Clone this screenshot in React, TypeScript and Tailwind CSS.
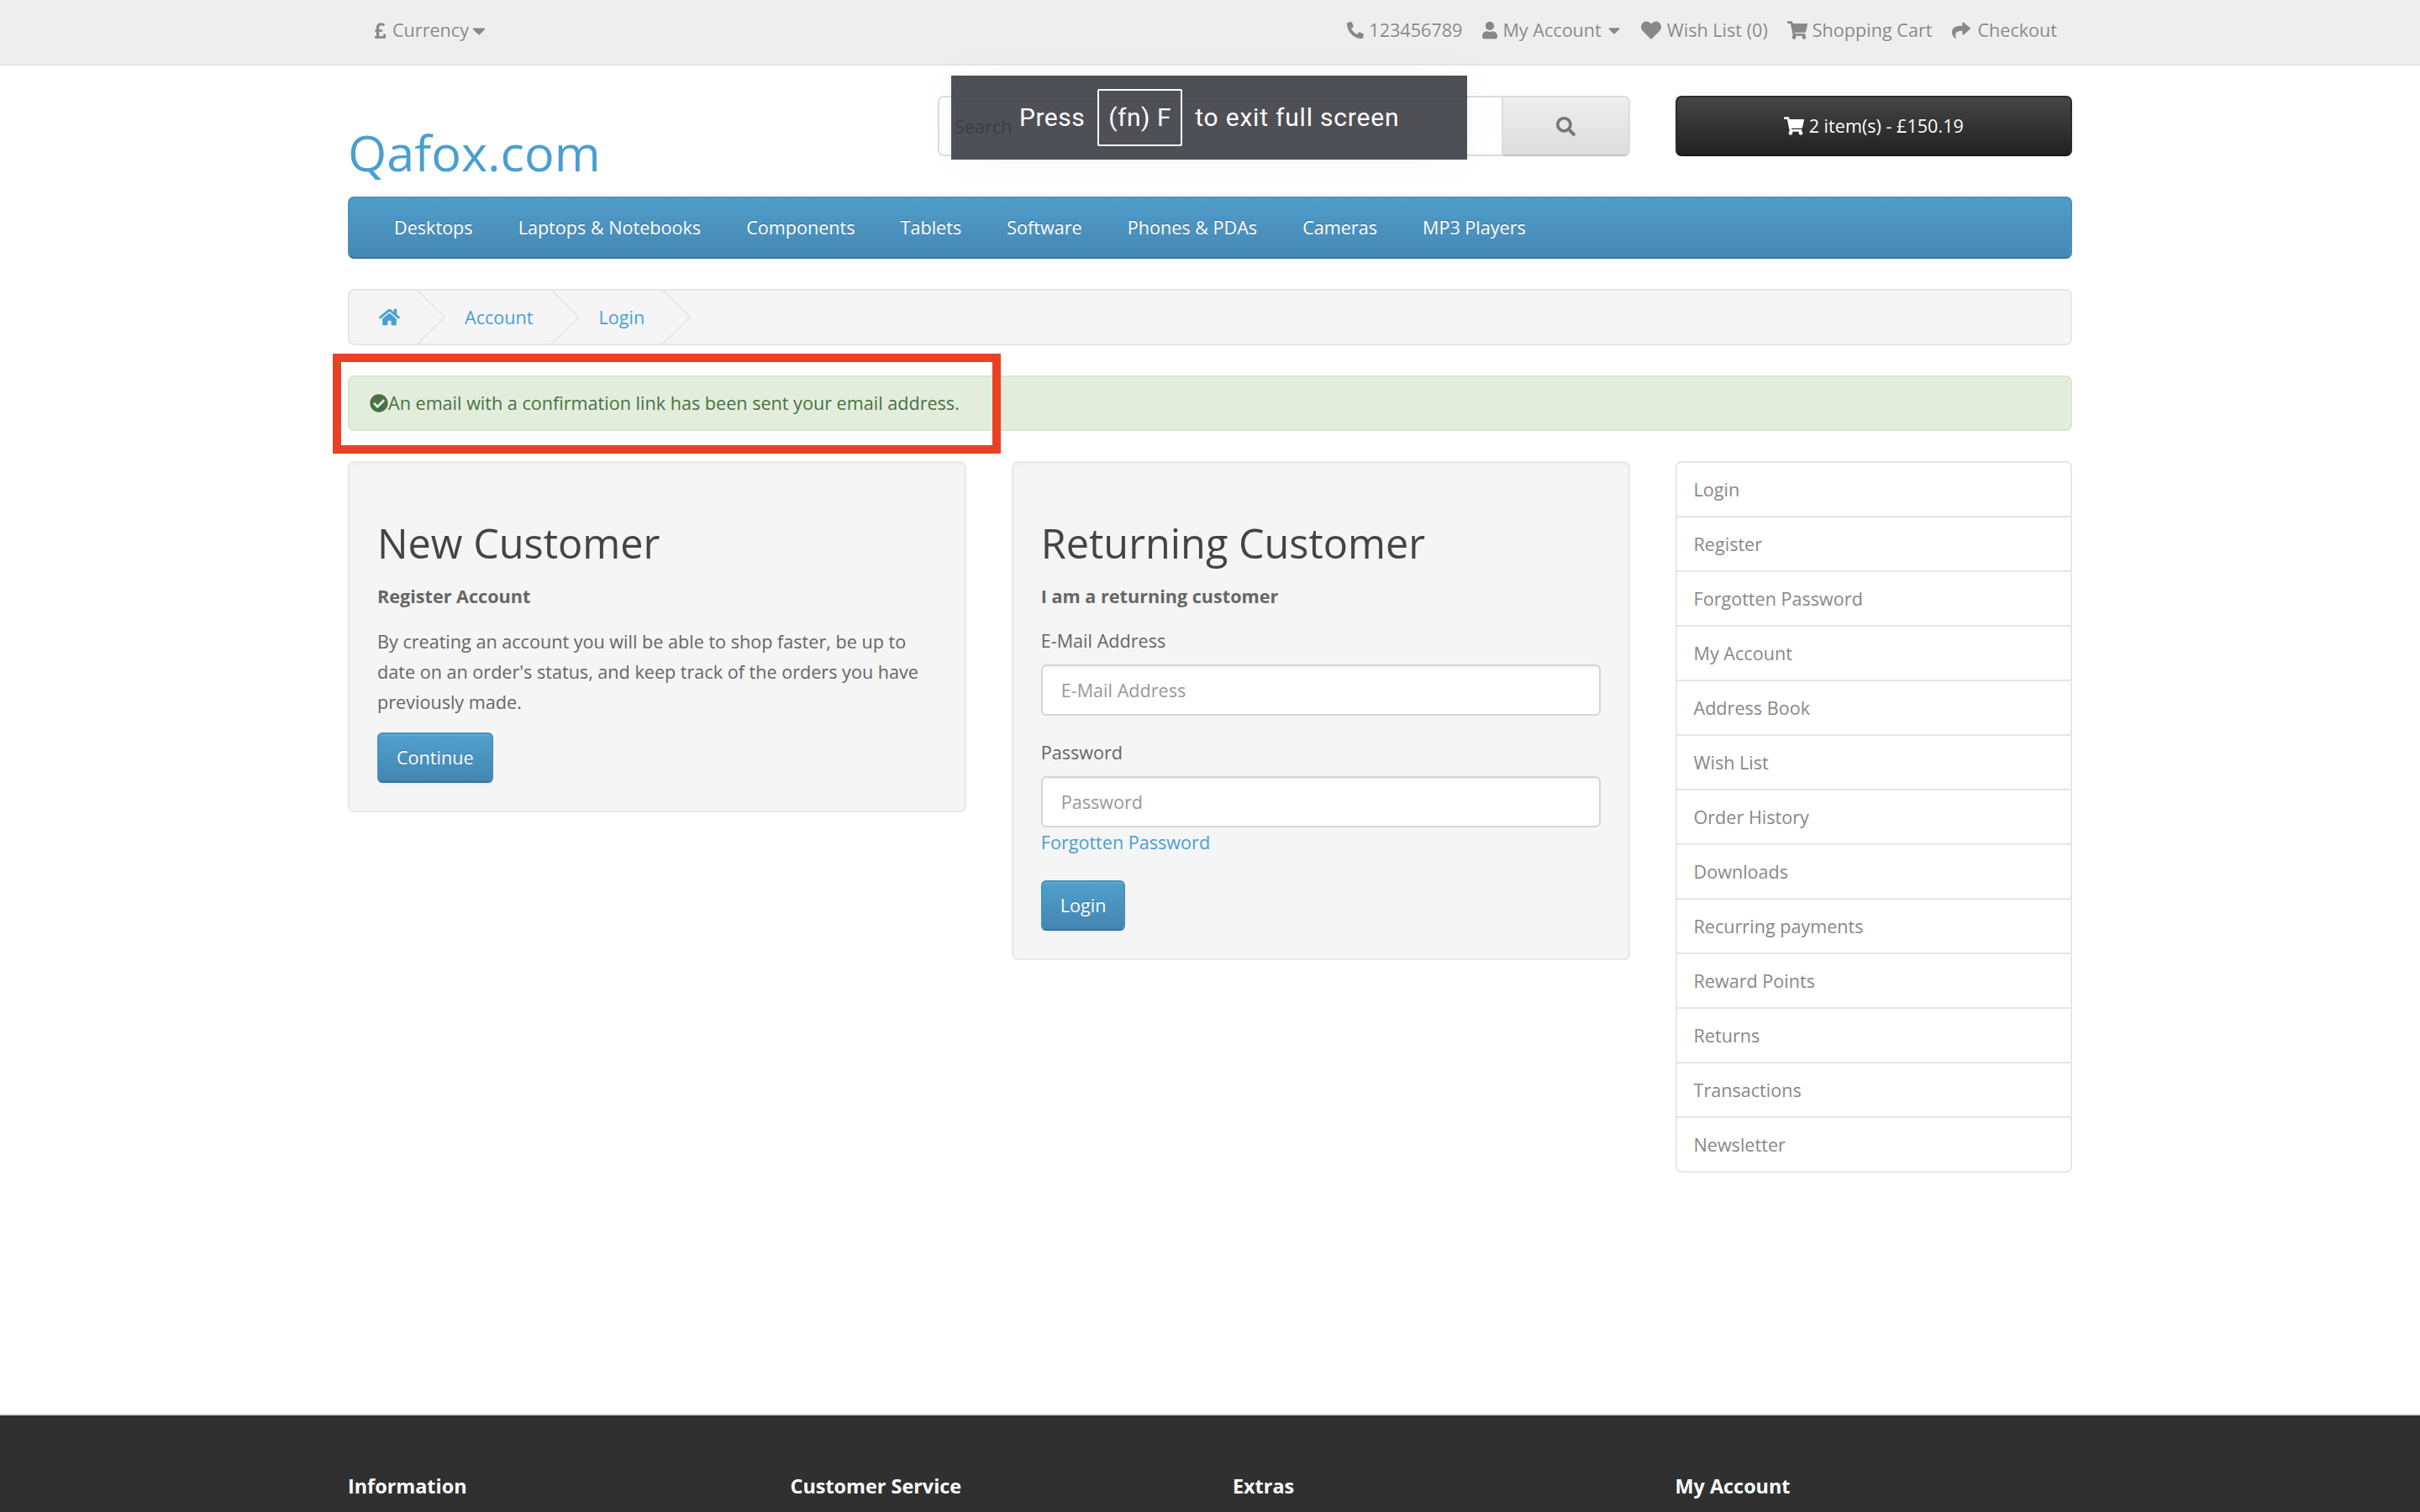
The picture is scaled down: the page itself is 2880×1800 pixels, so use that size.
import {
  FaCaretDown,
  FaCheckCircle,
  FaHeart,
  FaHome,
  FaPhone,
  FaPoundSign,
  FaSearch,
  FaShare,
  FaShoppingCart,
  FaUser,
} from "react-icons/fa";

const navItems = ["Desktops", "Laptops & Notebooks", "Components", "Tablets", "Software", "Phones & PDAs", "Cameras", "MP3 Players"];
const sideLinks = [
  "Login",
  "Register",
  "Forgotten Password",
  "My Account",
  "Address Book",
  "Wish List",
  "Order History",
  "Downloads",
  "Recurring payments",
  "Reward Points",
  "Returns",
  "Transactions",
  "Newsletter",
];
const footerCols = ["Information", "Customer Service", "Extras", "My Account"];

const blueBtn =
  "h-[60px] rounded-[6px] border-[2px] border-[#4a90bb] border-b-[#33749e] bg-gradient-to-b from-[#50a0cd] to-[#4486b1] px-[21px] text-[21.6px] text-white [text-shadow:0_-1px_0_rgba(0,0,0,0.25)] shadow-[inset_0_2px_0_rgba(255,255,255,0.1),0_2px_3px_rgba(0,0,0,0.05)]";
const panel =
  "w-[735.75px] rounded-[7px] border-[2px] border-[#e9e9e9] bg-[#f5f5f5] px-[33px] pt-[33px] pb-[33px] shadow-[inset_0_2px_2px_rgba(0,0,0,0.04)]";
const field =
  "block h-[61px] w-full rounded-[6px] border-[2px] border-[#d6d6d6] bg-white px-[22px] text-[21.6px] placeholder:text-[#999] shadow-[inset_0_2px_2px_rgba(0,0,0,0.05)]";

function Chevron() {
  return (
    <svg className="absolute top-0 right-0 h-full w-[34px]" viewBox="0 0 34 67" preserveAspectRatio="none" fill="none">
      <polyline points="1,0 33,33.5 1,67" stroke="#e4e4e4" strokeWidth="1.6" />
    </svg>
  );
}

function TopItem({ icon, label, className }: { icon: React.ReactNode; label: string; className?: string }) {
  return (
    <a className={"flex items-center gap-[6px] " + (className ?? "")}>
      {icon}
      <span>{label}</span>
    </a>
  );
}

export default function App() {
  return (
    <div className="relative flex h-screen flex-col overflow-hidden bg-white font-['Open_Sans',sans-serif] text-[21.6px] leading-[36px] text-[#666]">
      {/* Top bar */}
      <nav className="h-[78px] shrink-0 border-b-[2px] border-[#e5e5e5] bg-[#eeeeee] text-[#888] [text-shadow:0_1px_0_#fff]">
        <div className="mx-auto flex h-[72px] w-[2052px] items-center justify-between pr-[18px] pl-[31px]">
          <div className="flex items-center">
            <FaPoundSign className="mr-[7px] h-[21px] w-[15px]" />
            <span>Currency</span>
            <FaCaretDown className="ml-[4px] h-[25px] w-[16px]" />
          </div>
          <div className="flex items-center">
            <TopItem icon={<FaPhone className="h-[24px] w-[20px] -scale-x-100" />} label="123456789" />
            <a className="ml-[24px] flex items-center gap-[6px]">
              <FaUser className="h-[22px] w-[18px]" />
              <span>My Account</span>
              <FaCaretDown className="ml-[2px] h-[22px] w-[14px]" />
            </a>
            <TopItem className="ml-[24px]" icon={<FaHeart className="h-[24px] w-[26px]" />} label="Wish List (0)" />
            <TopItem className="ml-[23px]" icon={<FaShoppingCart className="h-[22px] w-[24px]" />} label="Shopping Cart" />
            <TopItem className="ml-[22px]" icon={<FaShare className="h-[22px] w-[26px]" />} label="Checkout" />
          </div>
        </div>
      </nav>

      {/* Logo, search, cart */}
      <header className="mx-auto mt-[36px] flex h-[120px] w-[2052px] shrink-0 gap-[54px]">
        <div className="w-[648px]">
          <h1 className="mt-[35px] text-[59.4px] leading-[65px] font-normal text-[#4a9fd0]">Qafox.com</h1>
        </div>
        <div className="flex h-[72px] w-[823.5px]">
          <input
            placeholder="Search"
            className="h-[72px] min-w-0 flex-1 rounded-l-[7px] border-[2px] border-[#ddd] bg-white px-[18px] text-[21.6px] placeholder:text-[#444]"
          />
          <button className="flex h-[72px] w-[151px] shrink-0 items-center justify-center rounded-r-[7px] border-[2px] border-l-0 border-[#dcdcdc] border-b-[#c4c4c4] bg-gradient-to-b from-[#efefef] to-[#dcdcdc]">
            <FaSearch className="h-[23px] w-[23px] text-[#777]" />
          </button>
        </div>
        <button className="flex h-[72px] w-[472.5px] items-center justify-center gap-[6px] rounded-[7px] border-[2px] border-[#2b2b2b] border-b-[#151515] bg-gradient-to-b from-[#464646] to-[#222] text-[21.6px] text-white [text-shadow:0_-1px_0_rgba(0,0,0,0.25)]">
          <FaShoppingCart className="h-[22px] w-[24px]" />
          <span>2 item(s) - £150.19</span>
        </button>
      </header>

      {/* Menu */}
      <div className="mx-auto flex h-[74px] w-[2052px] shrink-0 items-center rounded-[7px] border-[2px] border-[#4a90bb] border-b-[#33749e] bg-gradient-to-b from-[#4f9dca] to-[#4688b3] px-[26px] text-white [text-shadow:0_-1px_0_rgba(0,0,0,0.25)]">
        {navItems.map((item) => (
          <a key={item} className="px-[27px]">
            {item}
          </a>
        ))}
      </div>

      {/* Breadcrumb */}
      <ul className="mx-auto mt-[36px] flex h-[67px] w-[2052px] shrink-0 items-center rounded-[7px] border-[2px] border-[#e6e6e6] bg-[#f5f5f5] leading-[34px] text-[#4a9fd0]">
        <li className="relative flex h-full w-[114px] items-center pl-[35px]">
          <FaHome className="h-[23px] w-[25px]" />
          <Chevron />
        </li>
        <li className="relative flex h-full items-center pr-[55px] pl-[23px]">
          Account
          <Chevron />
        </li>
        <li className="relative flex h-full items-center pr-[55px] pl-[23px]">
          Login
          <Chevron />
        </li>
      </ul>

      {/* Success alert */}
      <div className="mx-auto mt-[36px] flex h-[66px] w-[2052px] shrink-0 items-center rounded-[7px] border-[2px] border-[#d9e8ce] bg-[#e2eedb] pl-[24px] text-[#4a7046]">
        <FaCheckCircle className="h-[22px] w-[22px]" />
        <span>An email with a confirmation link has been sent your email address.</span>
      </div>

      {/* Content */}
      <div className="mx-auto mt-[36px] flex w-[2052px] flex-1 items-start gap-[54px]">
        <div className="flex w-[1525.5px] items-start gap-[54px]">
          <section className={panel}>
            <h2 className="mt-[36px] mb-[18px] text-[48.6px] leading-[53.5px] font-normal text-[#444]">New Customer</h2>
            <p className="mb-[18px] font-bold">Register Account</p>
            <p className="mb-[18px]">
              By creating an account you will be able to shop faster, be up to date on an order's status, and keep track of
              the orders you have previously made.
            </p>
            <button className={blueBtn}>Continue</button>
          </section>

          <section className={panel}>
            <h2 className="mt-[36px] mb-[18px] text-[48.6px] leading-[53.5px] font-normal text-[#444]">Returning Customer</h2>
            <p className="mb-[18px] font-bold">I am a returning customer</p>
            <label className="mb-[9px] block h-[36px] leading-[33px]">E-Mail Address</label>
            <input placeholder="E-Mail Address" className={"mb-[27px] " + field} />
            <label className="mb-[9px] block h-[36px] leading-[33px]">Password</label>
            <input placeholder="Password" className={field} />
            <a className="mb-[27px] block h-[36px] leading-[36px] text-[#4a9fd0]">Forgotten Password</a>
            <button className={blueBtn}>Login</button>
          </section>
        </div>

        <aside className="w-[472.5px] overflow-hidden rounded-[7px] border-[2px] border-[#e6e6e6] text-[#888]">
          {sideLinks.map((link, i) => (
            <a
              key={link}
              className={"flex items-center pl-[20px] " + (i > 0 ? "h-[65px] border-t-[2px] border-[#e6e6e6]" : "h-[63px]")}
            >
              {link}
            </a>
          ))}
        </aside>
      </div>

      {/* Footer */}
      <footer className="h-[117px] shrink-0 border-t-[2px] border-[#ddd] bg-[#303030] pt-[66px]">
        <div className="mx-auto flex w-[2052px]">
          {footerCols.map((col, i) => (
            <h5 key={col} className={"text-[23.4px] leading-[36px] font-bold text-white " + (i < 3 ? "w-[526.5px]" : "")}>
              {col}
            </h5>
          ))}
        </div>
      </footer>

      {/* Browser full screen hint */}
      <div className="absolute top-[90px] left-[1132px] flex h-[100px] w-[614px] items-center bg-[#3c3d42]/90 pl-[81px] font-['Roboto',sans-serif] text-[30px] tracking-[0.5px] text-white shadow-[0_0_60px_rgba(0,0,0,0.03)]">
        <span>Press</span>
        <span className="mx-[15px] flex h-[68px] w-[101px] items-center justify-center rounded-[2px] border-[2px] border-white">(fn) F</span>
        <span className="tracking-[0.8px]">to exit full screen</span>
      </div>

      {/* Red annotation box */}
      <div className="absolute top-[421px] left-[396px] h-[119px] w-[795px] border-[10px] border-[#ea4125]" />
    </div>
  );
}
